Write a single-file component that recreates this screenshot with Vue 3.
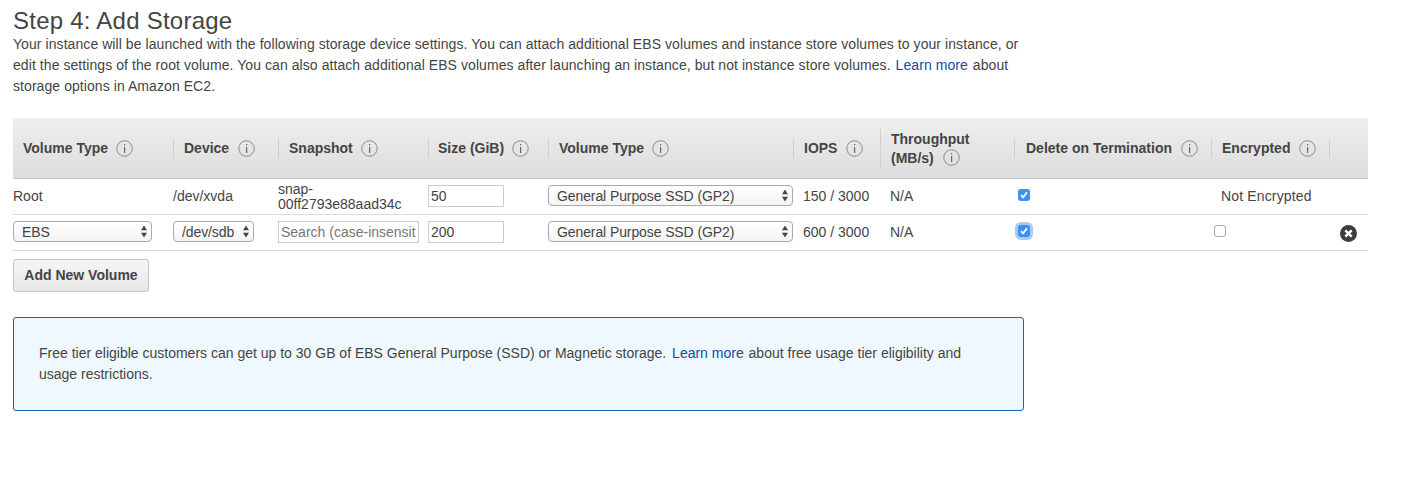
<template>
  <div class="page">
    <h1>Step 4: Add Storage</h1>
    <p class="intro">
      Your instance will be launched with the following storage device settings. You can attach additional EBS volumes and instance store volumes to your instance, or edit the settings of the root volume. You can also attach additional EBS volumes after launching an instance, but not instance store volumes.
      <a href="#">Learn more</a> about storage options in Amazon EC2.
    </p>

    <table class="volumes">
      <colgroup>
        <col v-for="(w, i) in colWidths" :key="i" :style="{ width: w + 'px' }" />
      </colgroup>
      <thead>
        <tr>
          <th v-for="(h, i) in headers" :key="i">
            <div class="head" :class="{ first: i === 0 }">
              <span v-if="h.lines" class="two-line">{{ h.lines[0] }}<br />{{ h.lines[1] }}<svg class="info" width="17" height="17" viewBox="0 0 17 17"><circle cx="8.5" cy="8.5" r="7.75" fill="none" stroke="#8a8a8a" /><rect x="8" y="7" width="1.2" height="6" fill="#666" /><rect x="8" y="4" width="1.2" height="1.4" fill="#666" /></svg></span>
              <template v-else-if="h.label">
                <span>{{ h.label }}</span>
                <svg class="info" width="17" height="17" viewBox="0 0 17 17"><circle cx="8.5" cy="8.5" r="7.75" fill="none" stroke="#8a8a8a" /><rect x="8" y="7" width="1.2" height="6" fill="#666" /><rect x="8" y="4" width="1.2" height="1.4" fill="#666" /></svg>
              </template>
            </div>
          </th>
        </tr>
      </thead>
      <tbody>
        <tr>
          <td>Root</td>
          <td>/dev/xvda</td>
          <td class="snap">snap-<br />00ff2793e88aad34c</td>
          <td><input class="field size" value="50" /></td>
          <td>
            <div class="select wide">
              <select><option>General Purpose SSD (GP2)</option></select>
              <svg class="arrows" width="6" height="13" viewBox="0 0 6 13"><path d="M3 0.5L6 5.2H0zM3 12.5L0 7.8H6z" fill="#444" /></svg>
            </div>
          </td>
          <td class="pad">150 / 3000</td>
          <td class="pad">N/A</td>
          <td class="check-cell"><span class="check on"><svg width="8" height="8" viewBox="0 0 8 8"><path d="M1 4.2L3.1 6.4L7 1.4" fill="none" stroke="#fff" stroke-width="1.8" /></svg></span></td>
          <td class="pad encrypted">Not Encrypted</td>
          <td></td>
        </tr>
        <tr>
          <td>
            <div class="select ebs">
              <select><option>EBS</option></select>
              <svg class="arrows" width="6" height="13" viewBox="0 0 6 13"><path d="M3 0.5L6 5.2H0zM3 12.5L0 7.8H6z" fill="#444" /></svg>
            </div>
          </td>
          <td>
            <div class="select dev">
              <select><option>/dev/sdb</option></select>
              <svg class="arrows" width="6" height="13" viewBox="0 0 6 13"><path d="M3 0.5L6 5.2H0zM3 12.5L0 7.8H6z" fill="#444" /></svg>
            </div>
          </td>
          <td><input class="field search" placeholder="Search (case-insensitive)" /></td>
          <td><input class="field size" value="200" /></td>
          <td>
            <div class="select wide">
              <select><option>General Purpose SSD (GP2)</option></select>
              <svg class="arrows" width="6" height="13" viewBox="0 0 6 13"><path d="M3 0.5L6 5.2H0zM3 12.5L0 7.8H6z" fill="#444" /></svg>
            </div>
          </td>
          <td class="pad">600 / 3000</td>
          <td class="pad">N/A</td>
          <td class="check-cell"><span class="check on focus"><svg width="8" height="8" viewBox="0 0 8 8"><path d="M1 4.2L3.1 6.4L7 1.4" fill="none" stroke="#fff" stroke-width="1.8" /></svg></span></td>
          <td class="check-cell off-cell"><span class="check"></span></td>
          <td class="remove-cell">
            <svg width="17" height="17" viewBox="0 0 17 17"><circle cx="8.5" cy="8.5" r="8.5" fill="#3d3d3d" /><path d="M5.3 5.3L11.7 11.7M11.7 5.3L5.3 11.7" stroke="#fff" stroke-width="2.4" /></svg>
          </td>
        </tr>
      </tbody>
    </table>

    <button type="button" class="add">Add New Volume</button>

    <div class="notice">
      Free tier eligible customers can get up to 30 GB of EBS General Purpose (SSD) or Magnetic storage.
      <a href="#">Learn more</a> about free usage tier eligibility and usage restrictions.
    </div>
  </div>
</template>

<script setup>
const colWidths = [160, 105, 150, 120, 245, 87, 134, 197, 118, 39]

const headers = [
  { label: 'Volume Type' },
  { label: 'Device' },
  { label: 'Snapshot' },
  { label: 'Size (GiB)' },
  { label: 'Volume Type' },
  { label: 'IOPS' },
  { lines: ['Throughput', '(MB/s)'] },
  { label: 'Delete on Termination' },
  { label: 'Encrypted' },
  {}
]
</script>

<style>
html, body {
  background: #fff;
}
</style>

<style scoped>
.page {
  padding: 8px 0 0 13px;
  font-family: "Liberation Sans", Arial, sans-serif;
  font-size: 14px;
  line-height: 21px;
  color: #444;
}
h1 {
  margin: 0;
  font-size: 24px;
  font-weight: 400;
  line-height: 26px;
  letter-spacing: 0.24px;
  color: #444;
}
.intro {
  margin: 0;
  width: 1012px;
  letter-spacing: 0.07px;
}
a {
  color: #0c4da2;
  text-decoration: none;
  margin: 0 1px;
}
.volumes {
  margin-top: 21px;
  width: 1355px;
  table-layout: fixed;
  border-collapse: collapse;
}
th {
  height: 60px;
  padding: 0;
  background: linear-gradient(#eeeeee, #dddddd);
  border-bottom: 1px solid #c6c6c6;
  vertical-align: middle;
  text-align: left;
}
.head {
  display: flex;
  align-items: center;
  gap: 9px;
  min-height: 19px;
  padding-left: 10px;
  border-left: 1px solid #cfcfcf;
  font-weight: 700;
  line-height: 19px;
  color: #444;
}
th:nth-child(1) .head,
th:nth-child(3) .head,
th:nth-child(5) .head {
  gap: 8px;
}
th:nth-child(4) .head {
  gap: 8px;
  padding-left: 9px;
}
th:nth-child(8) .head {
  padding-left: 11px;
}
.head.first {
  border-left: 0;
}
.two-line {
  display: block;
  padding-top: 1px;
}
.two-line .info {
  margin-left: 9px;
  vertical-align: -3px;
}
.info {
  flex: none;
}
td {
  height: 35px;
  padding: 0;
  border-bottom: 1px solid #ddd;
  vertical-align: middle;
}
td.snap {
  line-height: 15px;
}
td.pad {
  padding-left: 10px;
}
td.encrypted {
  letter-spacing: 0.15px;
}
.field {
  display: block;
  box-sizing: border-box;
  height: 22px;
  margin-bottom: 2px;
  padding: 0 2px;
  border: 1px solid #ccc;
  border-radius: 0;
  outline: none;
  background: #fff;
  font: inherit;
  color: #444;
}
.field::placeholder {
  color: #777;
  opacity: 1;
}
.size {
  width: 76px;
}
.search {
  width: 141px;
}
.select {
  position: relative;
  height: 21px;
  margin-bottom: 2px;
}
.select select {
  display: block;
  box-sizing: border-box;
  width: 100%;
  height: 100%;
  padding: 0 14px 0 8px;
  border: 1px solid #aaa;
  border-radius: 4px;
  outline: none;
  appearance: none;
  background: linear-gradient(#fff, #f4f4f4);
  font: inherit;
  letter-spacing: -0.1px;
  color: #444;
}
.arrows {
  position: absolute;
  top: 4px;
  right: 5px;
  pointer-events: none;
}
.ebs {
  width: 139px;
}
.dev {
  width: 81px;
}
.wide {
  width: 245px;
}
.check-cell {
  padding-left: 4px;
}
.check {
  display: flex;
  align-items: center;
  justify-content: center;
  box-sizing: border-box;
  width: 12px;
  height: 12px;
  margin-bottom: 4px;
  border: 1px solid #aaa;
  border-radius: 3px;
  background: #fff;
}
.off-cell {
  padding-left: 3px;
}
.check.on {
  border: 0;
  background: #3b8ff5;
}
.check.focus {
  box-shadow: 0 0 0 3px #a5cbf8;
}
.remove-cell svg {
  display: block;
  margin: 1px 0 0 11px;
}
.add {
  display: block;
  box-sizing: border-box;
  width: 136px;
  height: 33px;
  margin-top: 8px;
  padding: 0;
  border: 1px solid #c6c6c6;
  border-radius: 3px;
  background: linear-gradient(#f6f6f6, #e6e6e6);
  font: inherit;
  font-weight: 700;
  color: #444;
}
.notice {
  box-sizing: border-box;
  width: 1011px;
  height: 94px;
  margin-top: 25px;
  padding: 25px 25px 0;
  border: 1px solid #1166bb;
  border-radius: 3px;
  background: #f0f8ff;
}
.notice a {
  margin: 0 1px 0 2px;
}
</style>
